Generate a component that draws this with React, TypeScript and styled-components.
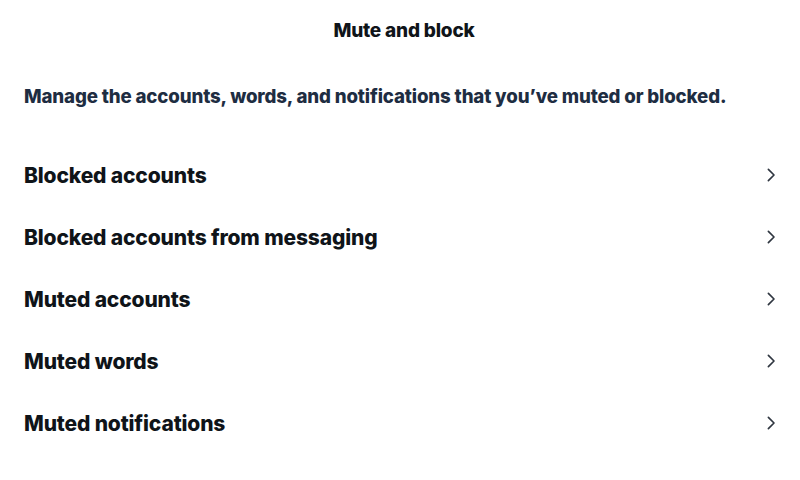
import styled, { createGlobalStyle } from 'styled-components'

const GlobalStyle = createGlobalStyle`
  html, body {
    margin: 0;
    padding: 0;
    background: #ffffff;
  }
  body {
    font-family: Inter, "Liberation Sans", Arial, sans-serif;
    -webkit-font-smoothing: antialiased;
  }
`

const Page = styled.div`
  width: 800px;
  height: 480px;
  box-sizing: border-box;
  background: #ffffff;
  display: flex;
  flex-direction: column;
`

const Header = styled.header`
  height: 60px;
  display: flex;
  align-items: center;
  justify-content: center;
`

const Title = styled.h1`
  margin: 0;
  padding-left: 8px;
  font-size: 19px;
  font-weight: 800;
  color: #0f1419;
  letter-spacing: -0.2px;
`

const Description = styled.p`
  margin: 25px 0 0;
  padding: 0 24px;
  font-size: 18.7px;
  font-weight: 800;
  line-height: 24px;
  color: #1e2d42;
  letter-spacing: -0.15px;
  white-space: nowrap;
`

const List = styled.ul`
  list-style: none;
  margin: 35px 0 0;
  padding: 0;
`

const Row = styled.li`
  height: 62px;
  display: flex;
  align-items: center;
  justify-content: space-between;
  padding: 0 20px 0 24px;
  cursor: pointer;
`

const Label = styled.span`
  font-size: 21px;
  font-weight: 800;
  color: #0f1419;
  letter-spacing: -0.15px;
`

const Chevron = () => (
  <svg width="18" height="18" viewBox="0 0 24 24" fill="none">
    <path d="M8.5 4.5 L16 12 L8.5 19.5" stroke="#2f3640" strokeWidth="2.2" strokeLinecap="round" strokeLinejoin="round" />
  </svg>
)

const items = [
  'Blocked accounts',
  'Blocked accounts from messaging',
  'Muted accounts',
  'Muted words',
  'Muted notifications',
]

export default function App() {
  return (
    <>
      <GlobalStyle />
      <Page>
        <Header>
          <Title>Mute and block</Title>
        </Header>
        <Description>
          Manage the accounts, words, and notifications that you’ve muted or blocked.
        </Description>
        <List>
          {items.map((item) => (
            <Row key={item}>
              <Label>{item}</Label>
              <Chevron />
            </Row>
          ))}
        </List>
      </Page>
    </>
  )
}
